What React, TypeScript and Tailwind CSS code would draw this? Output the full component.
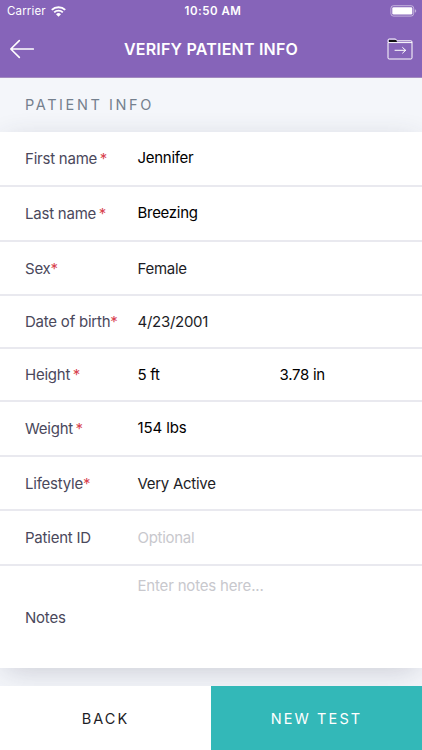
import type { ReactNode } from "react";
import { clsx } from "clsx";

interface FieldRowProps {
  label: string;
  mark?: "tight" | "spaced";
  className: string;
  children: ReactNode;
}

function FieldRow({ label, mark, className, children }: FieldRowProps) {
  return (
    <div
      className={clsx(
        "flex items-center border-[#e9e9ef] pt-[2px] pl-[25px]",
        className
      )}
    >
      <div className="w-[112.5px] shrink-0 whitespace-nowrap tracking-[-0.22px] text-[#4a485b]">
        {label}
        {mark && (
          <span
            className={clsx("text-[#d8434f]", mark === "spaced" ? "ml-[2.5px]" : "ml-0")}
          >
            *
          </span>
        )}
      </div>
      {children}
    </div>
  );
}

function StatusBar() {
  return (
    <div className="flex h-[22px] items-center justify-between pl-[7px] pr-[5px] text-[11.5px]">
      <div className="flex w-[120px] items-center gap-[5px]">
        <span className="pt-px tracking-[0.15px]">Carrier</span>
        <svg width="15" height="11" viewBox="0 0 15 11" fill="none" stroke="currentColor">
          <path d="M.8 3.9a9.6 9.6 0 0 1 13.4 0" strokeWidth="2" />
          <path d="M3.2 6.4a6.1 6.1 0 0 1 8.6 0" strokeWidth="1.9" />
          <path d="M7.5 10.7 5 8.2a3.5 3.5 0 0 1 5 0Z" fill="currentColor" stroke="none" />
        </svg>
      </div>
      <span className="pt-px pl-[2px] font-semibold tracking-[0.5px]">10:50 AM</span>
      <div className="flex w-[120px] justify-end">
        <svg width="27" height="12" viewBox="0 0 27 12" fill="none">
          <rect x="0.9" y="0.7" width="22.8" height="10.4" rx="2.6" stroke="#fff" strokeOpacity="0.5" />
          <rect x="2.3" y="2.2" width="20" height="7.4" rx="1.3" fill="#fff" />
          <path d="M24.8 4.2v3.4c1-.3 1.4-1 1.4-1.7s-.4-1.4-1.4-1.7Z" fill="#fff" fillOpacity="0.5" />
        </svg>
      </div>
    </div>
  );
}

function Header() {
  return (
    <header className="h-[78px] border-b border-[#a28abf] bg-[#8664b9] text-white">
      <StatusBar />
      <div className="flex h-[54px] items-center justify-between pl-[9px] pr-[9px]">
        <button aria-label="Back" className="w-[26px]">
          <svg width="25" height="20" viewBox="0 0 25 20" fill="none" stroke="currentColor" strokeWidth="1.6" strokeLinecap="round" strokeLinejoin="round">
            <path d="M24.3 10H1.8M10.3 1.6 1.8 10l8.5 8.4" />
          </svg>
        </button>
        <h1 className="text-[16px] font-semibold tracking-[0.22px]">VERIFY PATIENT INFO</h1>
        <button aria-label="Export" className="w-[26px]">
          <svg width="26" height="22" viewBox="0 0 26 22" fill="none">
            <path d="M1 4.3V2.3C1 1.5 1.4 1 2.2 1h6.4l1.3 1.8h14c.8 0 1.1.4 1.1 1.1v16c0 .7-.4 1.1-1.1 1.1H2.1C1.4 21 1 20.6 1 19.9V4.6h24" stroke="#fff" />
            <path d="M2 1.9h7.2l.8 2.2H2Z" fill="#111" />
            <path d="M8 12.3h10.6M15.6 9.5l3 2.8-3 2.8" stroke="#fff" strokeLinecap="round" strokeLinejoin="round" />
          </svg>
        </button>
      </div>
    </header>
  );
}

export default function App() {
  return (
    <div className="flex h-[750px] w-[422px] flex-col overflow-hidden bg-[#f4f6fa] font-['Inter',sans-serif] text-[15px] text-[#1d1d26]">
      <Header />
      <main className="flex-1">
        <h2 className="flex h-[54px] items-center pl-[25px] text-[14.5px] tracking-[2.6px] text-[#74808e]">
          PATIENT INFO
        </h2>
        <section className="h-[536px] bg-white tracking-[-0.28px] shadow-[0_6px_28px_-5px_rgba(50,50,80,0.24)]">
          <FieldRow label="First name" mark="spaced" className="h-[55px] border-b-2">
            <span className="-mt-[2px] text-black">Jennifer</span>
          </FieldRow>
          <FieldRow label="Last name" mark="spaced" className="h-[55px] border-b-2">
            <span className="-mt-[2px] text-black">Breezing</span>
          </FieldRow>
          <FieldRow label="Sex" mark="tight" className="h-[54px] border-b-2">
            <span>Female</span>
          </FieldRow>
          <FieldRow label="Date of birth" mark="tight" className="h-[53px] border-b-2">
            <span>4/23/2001</span>
          </FieldRow>
          <FieldRow label="Height" mark="spaced" className="h-[53px] border-b-2">
            <span className="w-[142px] text-black">5 ft</span>
            <span className="text-black">3.78 in</span>
          </FieldRow>
          <FieldRow label="Weight" mark="spaced" className="h-[55px] border-b-2">
            <span className="-mt-[2px] tracking-[-0.1px] text-black">154 lbs</span>
          </FieldRow>
          <FieldRow label="Lifestyle" mark="tight" className="h-[54px] border-b-2">
            <span>Very Active</span>
          </FieldRow>
          <FieldRow label="Patient ID" className="h-[55px] border-b-2">
            <span className="text-[#c8c8cd]">Optional</span>
          </FieldRow>
          <FieldRow label="Notes" className="h-[102px]">
            <span className="self-start pt-[7px] tracking-[-0.18px] text-[#c8c8cd]">
              Enter notes here...
            </span>
          </FieldRow>
        </section>
      </main>
      <footer className="relative grid h-16 grid-cols-2 text-[14.5px] tracking-[2.1px]">
        <button className="bg-white pt-px">BACK</button>
        <button className="bg-[#33b8b8] pt-px text-white">NEW TEST</button>
      </footer>
    </div>
  );
}
